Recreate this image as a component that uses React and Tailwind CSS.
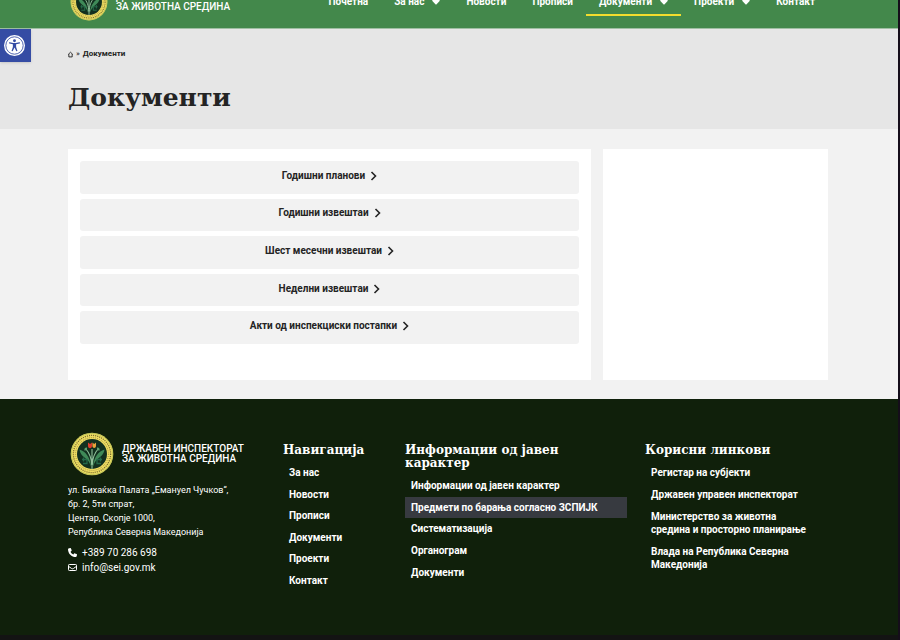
import React from "react";

const navItems = [
  { label: "Почетна" },
  { label: "За нас", menu: true },
  { label: "Новости" },
  { label: "Прописи" },
  { label: "Документи", menu: true, active: true },
  { label: "Проекти", menu: true },
  { label: "Контакт" },
];

const documents = [
  "Годишни планови",
  "Годишни извештаи",
  "Шест месечни извештаи",
  "Неделни извештаи",
  "Акти од инспекциски постапки",
];

const siteLinks = ["За нас", "Новости", "Прописи", "Документи", "Проекти", "Контакт"];

const publicInfo = [
  { label: "Информации од јавен карактер" },
  { label: "Предмети по барања согласно ЗСПИЈК", active: true },
  { label: "Систематизација" },
  { label: "Органограм" },
  { label: "Документи" },
];

const usefulLinks = [
  "Регистар на субјекти",
  "Државен управен инспекторат",
  "Министерство за животна средина и просторно планирање",
  "Влада на Република Северна Македонија",
];

function Emblem({ className }) {
  return (
    <svg viewBox="0 0 44 44" className={className} aria-hidden="true">
      <circle cx="22" cy="22" r="21.3" fill="#efdc62" />
      <circle cx="22" cy="22" r="20.6" fill="none" stroke="#8fae4c" strokeWidth="0.5" />
      <circle cx="22" cy="22" r="18.6" fill="none" stroke="#77702f" strokeWidth="1.3" strokeDasharray="1.1 1" />
      <circle cx="22" cy="22" r="16.4" fill="none" stroke="#8c8438" strokeWidth="0.9" strokeDasharray="0.9 1.2" />
      <circle cx="22" cy="22" r="15" fill="#12301f" />
      <path d="M21.3 36C20.5 26 16 19.5 9.5 17.5c.8 5.5 4.5 7.5 8 10.5 1.7 2 3 4.5 3.8 8z" fill="#3f8a58" />
      <path d="M22.7 36c.8-10 5.3-16.5 11.8-18.5-.8 5.5-4.5 7.5-8 10.5-1.7 2-3 4.5-3.800 8z" fill="#3f8a58" />
      <path d="M21.7 33c-.2-7-1.7-11.5-6.2-16.5M22.300 33c.2-7 1.700-11.500 6.200-16.500M22 37V17" fill="none" stroke="#8fc09a" strokeWidth="1.1" />
      <path d="M17 15.500c-2-.2-2.800 1-2.600 3 1.800.4 3-.8 2.600-3zM27 15.500c2-.2 2.800 1 2.600 3-1.800.4-3-.8-2.600-3z" fill="#5ea06e" />
      <g fill="none" stroke="#25694a" strokeWidth="1.3">
        <path d="M12 27.500h5v4h-4M13.500 25.500v4M32 27.500h-5v4h4M30.500 25.500v4" />
      </g>
      <path d="M18 10.500l2 1.500 2-1.500v3.700q-.2 2-2 2t-2-2z" fill="#dc3a2c" />
      <path d="M22.400 10.500l1.800 1.500 1.800-1.500v3.700q-.2 1.800-1.800 1.800t-1.800-1.800z" fill="#e8a23a" />
    </svg>
  );
}

function Brand({ size }) {
  return (
    <a href="#home" className="flex items-center gap-2 text-[10px] leading-[10px] font-medium text-white">
      <Emblem className={size} />
      <span className="whitespace-nowrap">
        ДРЖАВЕН ИНСПЕКТОРАТ
        <br />
        ЗА ЖИВОТНА СРЕДИНА
      </span>
    </a>
  );
}

function FooterHeading({ children }) {
  return <h2 className="font-['DejaVu_Serif','Noto_Serif',serif] text-xs leading-[13px] font-bold">{children}</h2>;
}

export default function App() {
  return (
    <div className="border-r-2 border-[#150d1a] bg-[#f2f2f2] font-['Roboto','Noto_Sans',sans-serif] text-[#242424]">
      <header className="flex h-[29px] items-end justify-between overflow-hidden border-b border-[#9fbfa3] bg-[#43884b] pr-[70px] pl-[70px]">
        <div className="pb-[7px]">
          <Brand size="size-[38px]" />
        </div>
        <nav className="flex pb-3 text-[10px] leading-3 font-bold text-white">
          {navItems.map((item) => (
            <a
              key={item.label}
              href="#nav"
              className={`flex items-center gap-2 border-b-2 px-[13px] pt-2 pb-[6px] ${
                item.active ? "border-[#f2dc2e]" : "border-transparent"
              }`}
            >
              {item.label}
              {item.menu && (
                <svg viewBox="0 0 8 5" className="h-[5px] w-2" aria-hidden="true">
                  <path d="M0.7 0h6.6q.9 0 .3.9L4.6 4.3q-.6.6-1.2 0L.4.9Q-.2 0 .7 0z" fill="currentColor" />
                </svg>
              )}
            </a>
          ))}
        </nav>
      </header>

      <section className="relative bg-[#e6e6e6] pt-[19px] pb-[15px] pl-[68px]">
        <button
          type="button"
          aria-label="Пристапност"
          className="absolute top-0 left-0 flex h-[33px] w-[31px] items-center justify-center bg-[#354ca4] pr-[2px] shadow-sm"
        >
          <svg viewBox="0 0 22 22" className="size-[21px]" aria-hidden="true">
            <circle cx="11" cy="11" r="11" fill="#fff" />
            <circle cx="11" cy="11" r="9.1" fill="none" stroke="#354ca4" strokeWidth="0.9" />
            <circle cx="11" cy="6" r="1.5" fill="#354ca4" />
            <path d="M5.8 8.2l3.7.9h3l3.7-.9" fill="none" stroke="#354ca4" strokeWidth="1.3" strokeLinecap="round" />
            <path d="M9.3 8.8h3.4v3.7l1.4 4.2-1.2.4L11 13l-1.9 4.1-1.2-.4 1.4-4.2z" fill="#354ca4" />
          </svg>
        </button>
        <nav className="flex items-center gap-[3px] text-[8px] leading-3">
          <a href="#home" aria-label="Почетна">
            <svg viewBox="0 0 6 7" className="h-[7px] w-[5px]" aria-hidden="true">
              <path d="M.3 3.4L3 .8l2.7 2.6M1 3v3.4h4V3" fill="none" stroke="#111111" strokeWidth="1" />
            </svg>
          </a>
          <span>»</span>
          <span className="font-bold">Документи</span>
        </nav>
        <h1 className="mt-[22px] font-['DejaVu_Serif','Noto_Serif',serif] text-[25px] leading-8 font-bold">Документи</h1>
      </section>

      <main className="grid grid-cols-[523fr_225fr] gap-3 pt-5 pr-[70px] pb-[19px] pl-[68px]">
        <section className="bg-white px-3 pt-3 pb-9">
          <ul className="grid h-[183px] auto-rows-fr gap-[5px]">
            {documents.map((title) => (
              <li key={title}>
                <a
                  href="#document"
                  className="flex h-full items-center justify-center gap-[5px] rounded-[3px] bg-[#f2f2f2] pb-[3px] text-[10px] leading-3 font-bold"
                >
                  {title}
                  <svg viewBox="0 0 7 10" className="h-[10px] w-[7px]" aria-hidden="true">
                    <path d="M1.5 1l4 4-4 4" fill="none" stroke="currentColor" strokeWidth="1.6" />
                  </svg>
                </a>
              </li>
            ))}
          </ul>
        </section>
        <aside className="bg-white" />
      </main>

      <footer className="border-b-[5px] border-[#131313] bg-[#10200b] pt-[33px] pr-[70px] pb-11 pl-[68px] text-white">
        <div className="grid grid-cols-[215fr_122fr_240fr_183fr]">
          <div>
            <div className="pl-[2px]">
              <Brand size="size-[44px]" />
            </div>
            <address className="mt-[7px] text-[9px] leading-[14px] not-italic">
              ул. Бихаќка Палата „Емануел Чучков“,
              <br />
              бр. 2, 5ти спрат,
              <br />
              Центар, Скопје 1000,
              <br />
              Република Северна Македонија
            </address>
            <ul className="mt-[6px] text-[10px] leading-[15px]">
              <li>
                <a href="tel:+38970286698" className="flex items-center gap-[5px]">
                  <svg viewBox="0 0 512 512" className="size-[9px]" aria-hidden="true">
                    <path
                      d="M164.9 24.6c-7.7-18.6-28-28.5-47.4-23.2l-88 24C12.1 30.2 0 46 0 64c0 247.4 200.6 448 448 448 18 0 33.8-12.1 38.6-29.5l24-88c5.3-19.4-4.6-39.7-23.2-47.4l-96-40c-16.3-6.8-35.2-2.1-46.3 11.6L304.7 368C234.3 334.7 177.3 277.7 144 207.3L193.3 167c13.7-11.2 18.4-30 11.6-46.3l-40-96z"
                      fill="currentColor"
                    />
                  </svg>
                  +389 70 286 698
                </a>
              </li>
              <li>
                <a href="mailto:info@sei.gov.mk" className="flex items-center gap-[5px]">
                  <svg viewBox="0 0 9 7" className="h-[7px] w-[9px]" aria-hidden="true">
                    <rect x="0.5" y="0.5" width="8" height="6" rx="0.8" fill="none" stroke="currentColor" />
                    <path d="M.6 2.4l3 2.1q.9.6 1.8 0l3-2.1" fill="none" stroke="currentColor" />
                  </svg>
                  info@sei.gov.mk
                </a>
              </li>
            </ul>
          </div>

          <nav className="pt-3">
            <FooterHeading>Навигација</FooterHeading>
            <ul className="mt-[5px] grid h-[129px] auto-rows-fr text-[10px] leading-[13px] font-bold">
              {siteLinks.map((label) => (
                <li key={label} className="flex items-center px-[6px]">
                  <a href="#page">{label}</a>
                </li>
              ))}
            </ul>
          </nav>

          <nav className="pt-3 pr-[18px]">
            <FooterHeading>Информации од јавен карактер</FooterHeading>
            <ul className="mt-[5px] grid h-[108px] auto-rows-fr text-[10px] leading-[13px] font-bold">
              {publicInfo.map((item) => (
                <li key={item.label} className={`flex items-center px-[6px] ${item.active ? "bg-[#373a40]" : ""}`}>
                  <a href="#info">{item.label}</a>
                </li>
              ))}
            </ul>
          </nav>

          <nav className="pt-3">
            <FooterHeading>Корисни линкови</FooterHeading>
            <ul className="mt-[5px] grid gap-px text-[10px] leading-[13px] font-bold">
              {usefulLinks.map((label) => (
                <li key={label} className="py-1 pr-4 pl-[6px]">
                  <a href="#link">{label}</a>
                </li>
              ))}
            </ul>
          </nav>
        </div>
      </footer>
    </div>
  );
}
